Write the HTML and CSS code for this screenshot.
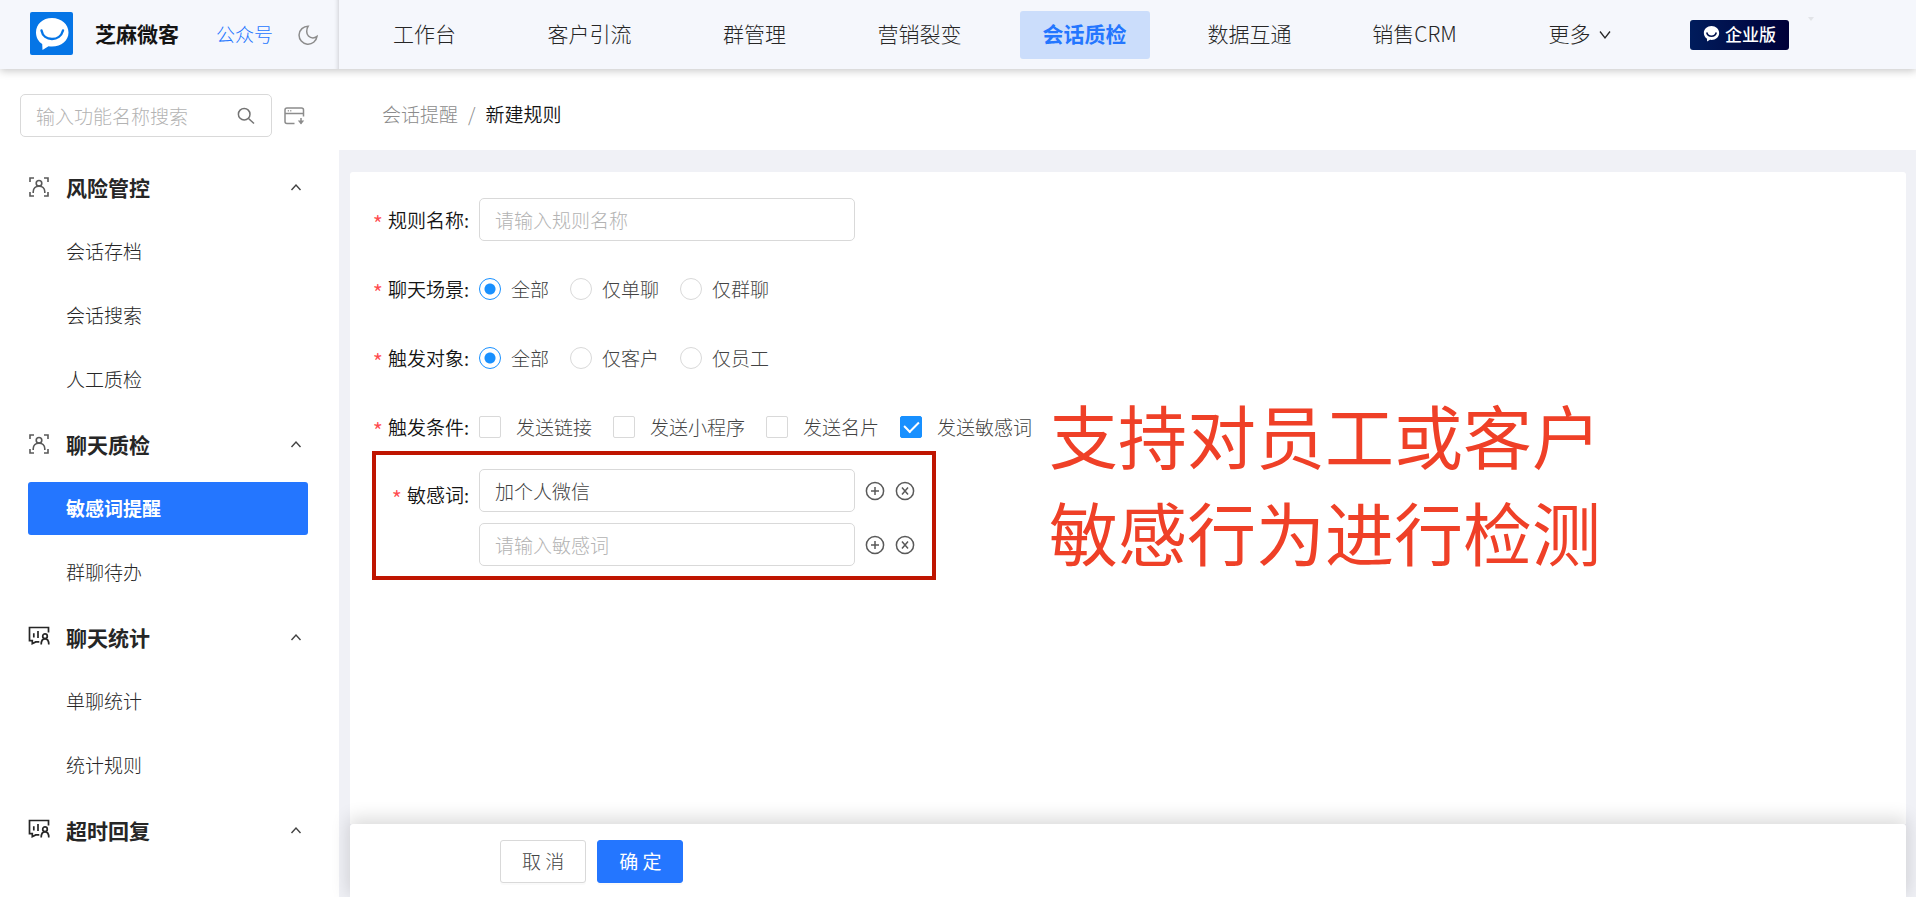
FILE: index.html
```html
<!DOCTYPE html>
<html lang="zh-CN">
<head>
<meta charset="utf-8">
<meta name="viewport" content="width=device-width, initial-scale=1">
<title>新建规则 - 芝麻微客</title>
<link rel="stylesheet" href="styles.css">
</head>
<body>
<svg class="defs" aria-hidden="true">
  <symbol id="scan" viewBox="0 0 22 22"><path d="M2 6V2h4M16 2h4v4M20 16v4h-4M6 20H2v-4" /><circle cx="11" cy="7.300" r="2.800"/><path d="M5.200 17v-1.200c0-3.400 2.600-5.700 5.800-5.700s5.800 2.300 5.800 5.700V17"/></symbol>
  <symbol id="stats" viewBox="0 0 22 22"><path d="M20.500 6.500V1.500h-19v13.200h2.800v3l3.400-1.800h3.600M5.800 7.200v4.300M10 5v7"/><circle cx="17" cy="10.200" r="2.300"/><path d="M13.200 18.500c0-3.500 1.500-5.600 3.800-5.600s3.800 2.100 3.800 5.600"/></symbol>
  <symbol id="up" viewBox="0 0 12 8"><path d="M1.500 7 6 2l4.500 5"/></symbol>
  <symbol id="plus" viewBox="0 0 20 20"><circle cx="10" cy="10" r="8.600"/><path d="M10 6v8M6 10h8"/></symbol>
  <symbol id="close" viewBox="0 0 20 20"><circle cx="10" cy="10" r="8.600"/><path d="m7 6.500 6 7M13 6.500l-6 7"/></symbol>
</svg>

<header class="header">
  <div class="brand">
    <svg class="logo" viewBox="0 0 43 43" aria-hidden="true"><rect width="43" height="43" rx="2" fill="#0575e6" stroke="none"/><path d="M22 6C12.500 6 6 12.300 6 20.500c0 5 2.400 9 6.200 11.600L12.500 38l6-3.700c1.200.2 2.300.3 3.500.3 9.500 0 16.500-6 16.500-14.100S31.500 6 22 6Z" fill="#fff" stroke="none"/><path d="M11.500 18.500C12.500 24 17 27 22 27s9.500-3 11-8.500" fill="none" stroke="#0575e6" stroke-width="2.400" stroke-linecap="round"/></svg>
    <strong class="brand-name">芝麻微客</strong>
    <a class="account" href="#">公众号</a>
    <button class="icon-btn moon" type="button" aria-label="深色模式"><svg viewBox="0 0 20 20"><path d="M10.200 1.200A9 9 0 1 0 19 11.400c-1.300 1-2.600 1.500-4.100 1.500a6.300 6.300 0 0 1-6.200-6.400c0-2.200.600-3.900 1.500-5.300Z"/></svg></button>
  </div>
  <nav class="nav" aria-label="主导航">
    <a href="#"><span>工作台</span></a>
    <a href="#"><span>客户引流</span></a>
    <a href="#"><span>群管理</span></a>
    <a href="#"><span>营销裂变</span></a>
    <a class="active" href="#" aria-current="page"><span>会话质检</span></a>
    <a href="#"><span>数据互通</span></a>
    <a href="#"><span>销售CRM</span></a>
    <a href="#"><span>更多<svg class="down" viewBox="0 0 12 10"><path d="M1 1.500 6 8l5-6.500"/></svg></span></a>
  </nav>
  <div class="edition"><svg viewBox="0 0 16 16" aria-hidden="true"><path d="M8 1C4 1 .8 3.800.8 7.500c0 2.300 1.200 4.200 3 5.400v2.600l2.800-1.600c.5.100.9.100 1.400.1 4 0 7.200-2.800 7.200-6.500S12 1 8 1Z" fill="#fff"/><path d="M3.500 7c.7 2.400 2.400 3.600 4.500 3.600s3.800-1.200 4.500-3.600" fill="none" stroke="#00114d" stroke-width="1.500"/></svg>企业版</div>
  <svg class="marker" viewBox="0 0 6 4" aria-hidden="true"><path d="M0 0h6L3 4Z"/></svg>
</header>

<div class="body">
  <aside class="sidebar">
    <div class="search-row">
      <div class="search">
        <input type="text" aria-label="搜索功能" placeholder="输入功能名称搜索">
        <button class="icon-btn" type="button" aria-label="搜索"><svg viewBox="0 0 18 18"><circle cx="7.200" cy="7.200" r="5.800"/><path d="m11.500 11.500 5.500 5"/></svg></button>
      </div>
      <button class="icon-btn collapse" type="button" aria-label="收起菜单"><svg viewBox="0 0 21 18"><path d="M10.500 16.500H3a2 2 0 0 1-2-2V3a2 2 0 0 1 2-2h14.500a2 2 0 0 1 2 2v6.500M1 6.500h18.500M17 11v5.500"/><path d="M13.800 13.500h6.400L17 17.500Z" fill="#8c8c8c" stroke="none"/><path d="M3.800 3.800h1M6.300 3.800h1"/></svg></button>
    </div>
    <nav class="menu" aria-label="功能菜单">
      <button class="group" type="button"><svg class="gi"><use href="#scan"/></svg>风险管控<svg class="caret"><use href="#up"/></svg></button>
      <a href="#">会话存档</a>
      <a href="#">会话搜索</a>
      <a href="#">人工质检</a>
      <button class="group" type="button"><svg class="gi"><use href="#scan"/></svg>聊天质检<svg class="caret"><use href="#up"/></svg></button>
      <a class="current" href="#" aria-current="page">敏感词提醒</a>
      <a href="#">群聊待办</a>
      <button class="group" type="button"><svg class="gi bold"><use href="#stats"/></svg>聊天统计<svg class="caret"><use href="#up"/></svg></button>
      <a href="#">单聊统计</a>
      <a href="#">统计规则</a>
      <button class="group" type="button"><svg class="gi bold"><use href="#stats"/></svg>超时回复<svg class="caret"><use href="#up"/></svg></button>
    </nav>
  </aside>

  <main class="main">
    <nav class="crumbs" aria-label="面包屑"><a href="#">会话提醒</a><span class="slash">/</span><span class="here">新建规则</span></nav>
    <form class="panel">
      <div class="fields">
        <div class="row">
          <label class="label" for="rule-name">规则名称:</label>
          <input class="text" id="rule-name" type="text" placeholder="请输入规则名称">
        </div>
        <div class="row" role="radiogroup" aria-labelledby="scene">
          <span class="label" id="scene">聊天场景:</span>
          <div class="options">
            <label class="radio"><input type="radio" name="scene" checked>全部</label>
            <label class="radio"><input type="radio" name="scene">仅单聊</label>
            <label class="radio"><input type="radio" name="scene">仅群聊</label>
          </div>
        </div>
        <div class="row" role="radiogroup" aria-labelledby="target">
          <span class="label" id="target">触发对象:</span>
          <div class="options">
            <label class="radio"><input type="radio" name="target" checked>全部</label>
            <label class="radio"><input type="radio" name="target">仅客户</label>
            <label class="radio"><input type="radio" name="target">仅员工</label>
          </div>
        </div>
        <div class="row" role="group" aria-labelledby="condition">
          <span class="label" id="condition">触发条件:</span>
          <div class="options">
            <label class="check"><input type="checkbox">发送链接</label>
            <label class="check"><input type="checkbox">发送小程序</label>
            <label class="check"><input type="checkbox">发送名片</label>
            <label class="check"><input type="checkbox" checked>发送敏感词</label>
          </div>
        </div>
        <div class="words">
          <label class="label" for="word-1">敏感词:</label>
          <div class="word-list">
            <div class="word">
              <input class="text" id="word-1" type="text" value="加个人微信">
              <button class="icon-btn" type="button" aria-label="添加"><svg><use href="#plus"/></svg></button>
              <button class="icon-btn" type="button" aria-label="删除"><svg><use href="#close"/></svg></button>
            </div>
            <div class="word">
              <input class="text" type="text" aria-label="敏感词 2" placeholder="请输入敏感词">
              <button class="icon-btn" type="button" aria-label="添加"><svg><use href="#plus"/></svg></button>
              <button class="icon-btn" type="button" aria-label="删除"><svg><use href="#close"/></svg></button>
            </div>
          </div>
        </div>
        <p class="note">支持对员工或客户<br>敏感行为进行检测</p>
      </div>
      <div class="actions">
        <button class="btn" type="button">取 消</button>
        <button class="btn primary" type="submit">确 定</button>
      </div>
    </form>
  </main>
</div>
</body>
</html>
```
FILE: styles.css
```css
* { box-sizing: border-box; }

body {
  margin: 0;
  height: 100vh;
  display: flex;
  flex-direction: column;
  overflow: hidden;
  background: #fff;
  color: #262626;
  font: 300 19px/28px "Noto Sans CJK SC", "Noto Sans", sans-serif;
}

a { color: inherit; text-decoration: none; }
button, input { font: inherit; color: inherit; }
svg { display: block; fill: none; stroke: currentColor; }
.defs { position: absolute; width: 0; height: 0; }

.icon-btn {
  flex: none;
  padding: 0;
  border: 0;
  background: none;
  cursor: pointer;
}

/* Header */
.header {
  position: relative;
  z-index: 2;
  flex: none;
  display: flex;
  align-items: center;
  height: 69px;
  background: #f5f7fc;
  box-shadow: 0 2px 8px rgba(0, 0, 0, .22);
}
.brand {
  flex: none;
  display: flex;
  align-items: center;
  width: 339px;
  height: 69px;
  padding: 0 0 2px 30px;
  box-shadow: inset -5px 0 4px -4px rgba(0, 0, 0, .16);
}
.logo { width: 43px; height: 43px; margin-right: 22px; }
.brand-name { padding-bottom: 2px; margin-right: 37px; font-size: 21px; font-weight: 700; color: #141414; }
.account { color: #2476ff; margin-right: 25px; }
.moon { padding-top: 3px; }
.moon svg { width: 20px; height: 20px; stroke: #8c8c8c; stroke-width: 1.500; }

.nav { display: flex; padding-left: 3px; font-size: 21px; }
.nav a { display: flex; justify-content: center; width: 165px; white-space: nowrap; }
.nav span { display: flex; align-items: center; height: 48px; padding: 0 23px 3px; border-radius: 3px; }
.nav .active span { background: #cbddfb; color: #2476ff; font-weight: 700; }
.down { width: 12px; height: 10px; margin: 3px 0 0 8px; stroke-width: 1.300; }

.edition {
  display: flex;
  align-items: center;
  justify-content: center;
  gap: 5px;
  width: 99px;
  height: 30px;
  margin-left: 28px;
  padding-bottom: 2px;
  border-radius: 3px;
  background: linear-gradient(90deg, #001c5c, #000038);
  color: #fff;
  font-size: 17px;
  font-weight: 500;
}
.edition svg { width: 17px; height: 17px; stroke: none; }
.marker { align-self: flex-start; width: 6px; height: 4px; margin: 17px 0 0 19px; fill: #e2e4e8; stroke: none; }

/* Sidebar */
.body { flex: 1; display: flex; min-height: 0; }
.sidebar { flex: none; width: 339px; padding: 25px 31px 0 20px; }
.search-row { display: flex; align-items: center; gap: 12px; margin-bottom: 23px; }
.search {
  display: flex;
  align-items: center;
  width: 252px;
  height: 43px;
  padding: 0 16px 0 15px;
  border: 1px solid #d9d9d9;
  border-radius: 5px;
}
.search input { flex: 1; min-width: 0; padding: 0; border: 0; outline: 0; background: none; }
::placeholder { color: #b3b3b3; opacity: 1; }
.search svg { width: 18px; height: 18px; stroke: #737373; stroke-width: 1.500; }
.collapse svg { width: 21px; height: 18px; stroke: #8c8c8c; stroke-width: 1.500; }

.menu { display: flex; flex-direction: column; padding-left: 8px; }
.menu a { height: 53px; margin-bottom: 11px; padding-left: 38px; border-radius: 3px; line-height: 52px; }
.menu .current { background: #2476ff; color: #fff; font-weight: 700; }
.group {
  display: flex;
  align-items: center;
  height: 54px;
  margin-bottom: 11px;
  padding: 0 6px 0 0;
  border: 0;
  background: none;
  font-size: 21px;
  font-weight: 700;
  text-align: left;
}
.gi { width: 22px; height: 22px; margin-right: 16px; stroke: #595959; stroke-width: 1.600; }
.gi.bold { stroke: #262626; stroke-width: 1.700; }
.caret { width: 12px; height: 8px; margin-left: auto; stroke: #434343; stroke-width: 1.400; }

/* Main */
.main { flex: 1; min-width: 0; display: flex; flex-direction: column; background: #f0f1f6; }
.crumbs { flex: none; display: flex; align-items: center; height: 81px; padding: 9px 43px 0; background: #fff; }
.crumbs a, .slash { color: #8c8c8c; }
.slash { margin: 0 10px; }
.here { font-weight: 350; color: #141414; }

.panel { flex: 1; display: flex; flex-direction: column; min-height: 0; margin: 22px 10px 0 11px; }
.fields {
  position: relative;
  flex: 1;
  min-height: 0;
  padding: 26px 22px 0;
  border-radius: 3px 3px 0 0;
  background: #fff;
}
.row { display: flex; align-items: center; min-height: 43px; margin-bottom: 26px; }
.label { flex: none; width: 107px; padding-right: 10px; text-align: right; font-weight: 350; color: #141414; }
.label::before { content: "*"; margin-right: 5px; color: #ff4d4f; font-size: 22px; line-height: 1; vertical-align: -5px; }
.text {
  width: 376px;
  height: 43px;
  padding: 0 15px;
  border: 1px solid #d9d9d9;
  border-radius: 5px;
  background: #fff;
  color: #434343;
  outline: 0;
}
.options { display: flex; gap: 21px; color: #434343; }
.radio, .check { display: flex; align-items: center; }
.radio { gap: 10px; }
.check { gap: 15px; }
.options input { appearance: none; margin: 0; border: 1px solid #d9d9d9; background: #fff; }
.radio input { width: 22px; height: 22px; border-radius: 50%; }
.radio input:checked { border-color: #1890ff; background: radial-gradient(circle, #1890ff 5px, #fff 6px); }
.check input { display: grid; place-items: center; width: 22px; height: 22px; border-radius: 2px; }
.check input:checked { border-color: #1890ff; background: #1890ff; }
.check input:checked::before {
  content: "";
  width: 7px;
  height: 12px;
  margin-bottom: 3px;
  border: solid #fff;
  border-width: 0 2px 2px 0;
  rotate: 45deg;
}

.words {
  display: flex;
  width: 564px;
  margin-top: -23px;
  padding: 14px 0 10px;
  border: 4px solid #bf1500;
}
.words .label { width: 103px; padding-top: 12px; }
.word-list { display: grid; gap: 11px; }
.word { display: flex; align-items: center; gap: 10px; }
.word svg { width: 20px; height: 20px; stroke: #595959; stroke-width: 1.500; }

/* Callout laid over the form */
.note {
  position: absolute;
  top: 214px;
  left: 699px;
  margin: 0;
  color: #ef4027;
  font-size: 69px;
  font-weight: 400;
  line-height: 97px;
  white-space: nowrap;
}

.actions {
  position: relative;
  flex: none;
  display: flex;
  gap: 11px;
  padding: 16px 150px 14px;
  border-radius: 3px 3px 0 0;
  background: #fff;
  box-shadow: 0 -4px 18px 2px rgba(0, 0, 0, .14);
}
.btn {
  height: 43px;
  padding: 0 21px 2px;
  border: 1px solid #d9d9d9;
  border-radius: 3px;
  background: #fff;
  color: #434343;
  box-shadow: 0 2px 0 rgba(0, 0, 0, .02);
}
.primary { border-color: #2476ff; background: #2476ff; color: #fff; font-weight: 400; }
```
